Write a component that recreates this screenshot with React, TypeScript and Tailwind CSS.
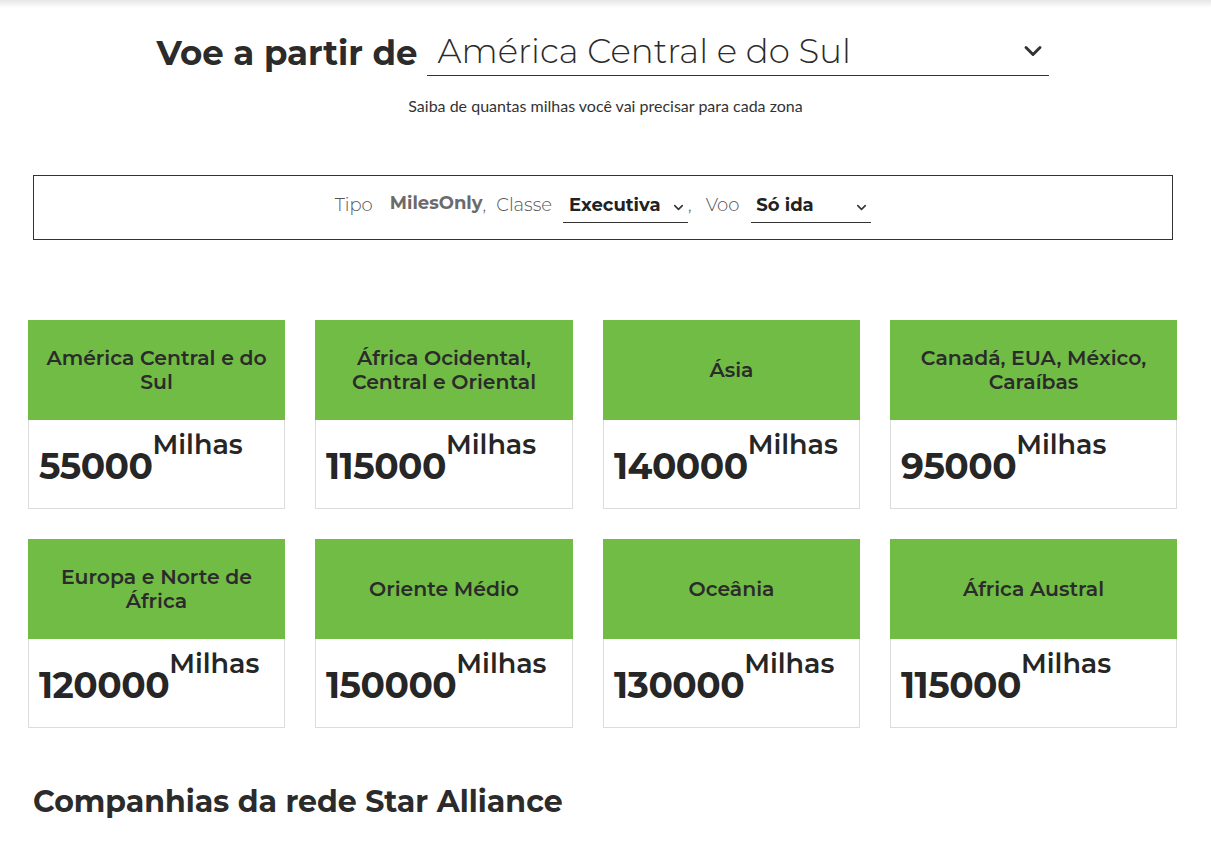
import { ChevronDown } from 'lucide-react'

type Zone = { name: string; miles: number }

const ZONES: Zone[] = [
  { name: 'América Central e do Sul', miles: 55000 },
  { name: 'África Ocidental, Central e Oriental', miles: 115000 },
  { name: 'Ásia', miles: 140000 },
  { name: 'Canadá, EUA, México, Caraíbas', miles: 95000 },
  { name: 'Europa e Norte de África', miles: 120000 },
  { name: 'Oriente Médio', miles: 150000 },
  { name: 'Oceânia', miles: 130000 },
  { name: 'África Austral', miles: 115000 },
]

const FONT = "font-['Montserrat','Inter','Noto_Sans',sans-serif]"

function ZoneCard({ zone }: { zone: Zone }) {
  return (
    <div className="flex flex-col">
      <div className="h-[100px] bg-[#71bc45] flex items-center justify-center px-[12px] text-center text-[20.4px] leading-[24px] font-semibold text-[#2b2b2b]">
        {zone.name}
      </div>
      <div className="h-[89px] border border-t-0 border-[#dcdcdc] px-[10px] pt-[28px] leading-none">
        <span className="text-[36px] font-bold text-[#262626] tracking-[-0.5px]">{zone.miles}</span>
        <sup className="text-[27px] font-semibold text-[#262626] top-[-25px]">Milhas</sup>
      </div>
    </div>
  )
}

export default function App() {
  return (
    <div className={`${FONT} min-h-[844px] bg-white text-[#2b2b2b] relative`}>
      <div className="absolute inset-x-0 top-0 h-[8px] bg-gradient-to-b from-[#e6e6e6] to-white" />

      <div className="pt-[27px] pr-[6px] flex items-end justify-center gap-[9px]">
        <h1 className="text-[34px] font-bold leading-[46px] text-[#2b2b2b]">Voe a partir de</h1>
        <div className="w-[622px] h-[49px] border-b border-[#333] flex items-center justify-between pl-[11px] pr-[2px]">
          <span className="text-[34px] font-light text-[#2b2b2b] leading-[46px]">América Central e do Sul</span>
          <ChevronDown className="w-[28px] h-[28px] text-[#333]" strokeWidth={2.5} />
        </div>
      </div>

      <p className="mt-[18px] text-center text-[16px] text-[#333] font-['Lato',sans-serif]">
        Saiba de quantas milhas você vai precisar para cada zona
      </p>

      <div className="mx-[33px] mt-[57px] w-[1140px] h-[65px] border border-[#333] flex items-center justify-center text-[18px]">
        <span className="font-light text-[#555] -translate-y-[2px]">Tipo</span>
        <span className="ml-[17px] font-bold text-[#6b6b6b] -translate-y-[4px]">MilesOnly</span>
        <span className="text-[#555] font-light -translate-y-[2px]">,</span>
        <span className="ml-[10px] font-light text-[#555] -translate-y-[2px]">Classe</span>
        <div className="ml-[11px] w-[125px] h-[34px] border-b border-[#333] flex items-center justify-between pl-[6px] pr-[2px] mt-[-4px]">
          <span className="font-bold text-[#222]">Executiva</span>
          <ChevronDown className="w-[15px] h-[15px] text-[#333] mt-[4px]" strokeWidth={2.5} />
        </div>
        <span className="text-[#555] font-light -translate-y-[2px]">,</span>
        <span className="ml-[14px] font-light text-[#555] -translate-y-[2px]">Voo</span>
        <div className="ml-[12px] w-[120px] h-[34px] border-b border-[#333] flex items-center justify-between pl-[5px] pr-[2px] mt-[-4px]">
          <span className="font-bold text-[#222]">Só ida</span>
          <ChevronDown className="w-[15px] h-[15px] text-[#333] mt-[4px]" strokeWidth={2.5} />
        </div>
      </div>

      <div className="mt-[80px] ml-[28px] grid grid-cols-[257px_258px_257px_287px] gap-x-[30px] gap-y-[30px]">
        {ZONES.map(z => <ZoneCard key={z.name} zone={z} />)}
      </div>

      <h2 className="mt-[51px] ml-[33px] text-[30px] font-bold text-[#2b2b2b]">Companhias da rede Star Alliance</h2>
    </div>
  )
}
